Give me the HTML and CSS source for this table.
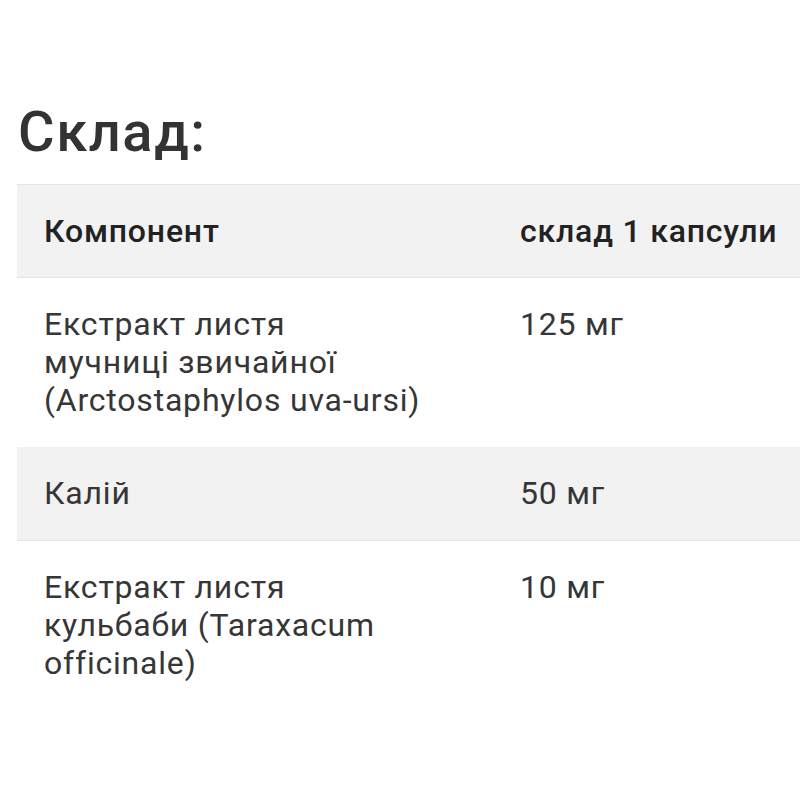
FILE: index.html
```html
<!DOCTYPE html>
<html lang="uk">
<head>
<meta charset="utf-8">
<link rel="stylesheet" href="styles.css">
</head>
<body>
<div class="page">
  <h2 class="title">Склад:</h2>
  <table class="comp">
    <thead>
      <tr>
        <th class="c1">Компонент</th>
        <th class="c2">склад 1 капсули</th>
      </tr>
    </thead>
    <tbody>
      <tr>
        <td class="c1">Екстракт листя<br>мучниці звичайної<br>(Arctostaphylos uva-ursi)</td>
        <td class="c2">125 мг</td>
      </tr>
      <tr class="alt">
        <td class="c1">Калій</td>
        <td class="c2">50 мг</td>
      </tr>
      <tr>
        <td class="c1">Екстракт листя<br>кульбаби (Taraxacum<br>officinale)</td>
        <td class="c2">10 мг</td>
      </tr>
    </tbody>
  </table>
</div>
</body>
</html>
```

FILE: styles.css
```css
html, body {
  margin: 0;
  padding: 0;
  background: #ffffff;
  overflow: hidden;
}
body {
  font-family: Roboto, "Liberation Sans", sans-serif;
  color: #333333;
}
.page {
  padding: 97px 0 0 17px;
}
.title {
  margin: 0 0 0 1px;
  font-size: 56px;
  font-weight: 500;
  letter-spacing: 1.6px;
  line-height: 71px;
  color: #333333;
}
.comp {
  margin-top: 16px;
  width: 783px;
  table-layout: fixed;
  border-collapse: collapse;
  font-size: 32px;
  letter-spacing: 0.8px;
  line-height: 38px;
}
.comp th, .comp td {
  box-sizing: border-box;
  text-align: left;
  vertical-align: top;
  padding: 27px 0 27px 27px;
  white-space: nowrap;
}
.comp td {
  padding-bottom: 28px;
}
.comp th {
  font-weight: 500;
  color: #222222;
}
.comp td {
  color: #363636;
}
.comp .c1 {
  width: 476px;
  padding-right: 40px;
}
.comp thead tr, .comp tr.alt {
  background: #f2f2f2;
}
.comp thead tr {
  border-top: 1px solid #e4e4e4;
  border-bottom: 1px solid #e4e4e4;
}
.comp tr.alt {
  border-bottom: 1px solid #e4e4e4;
}
```
